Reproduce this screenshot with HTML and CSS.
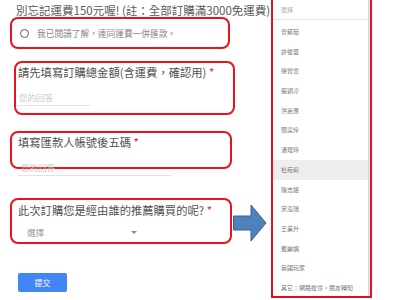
FILE: index.html
```html
<!DOCTYPE html>
<html lang="zh-Hant">
<head>
    <meta charset="UTF-8">
    <meta name="viewport" content="width=device-width, initial-scale=1.0">
    <title>訂購表單</title>
    <link rel="stylesheet" href="styles.css">
</head>
<body>
    <div class="page">
        <div class="form">
            <div class="notice">別忘記運費150元喔! (註：全部訂購滿3000免運費)</div>

            <div class="box box-radio">
                <span class="radio"></span>
                <span class="radio-label">我已閱讀了解，連同運費一併匯款。</span>
            </div>

            <div class="box box-total">
                <div class="title">請先填寫訂購總金額(含運費，確認用) <span class="req">*</span></div>
                <div class="answer answer-short">您的回答</div>
            </div>

            <div class="box box-account">
                <div class="title">填寫匯款人帳號後五碼 <span class="req">*</span></div>
                <div class="answer answer-long">您的回答</div>
            </div>

            <div class="box box-ref">
                <div class="title">此次訂購您是經由誰的推薦購買的呢? <span class="req">*</span></div>
                <div class="select">選擇<span class="caret"></span></div>
            </div>

            <button class="submit">提交</button>

            <svg class="arrow" width="34" height="38" viewBox="0 0 34 38">
                <polygon points="0.5,12 18,12 18,1 33,19 18,37 18,26 0.5,26" fill="#4f81bd" stroke="#3a6190" stroke-width="1"/>
            </svg>
        </div>

        <div class="picker">
            <div class="card">
                <div class="opt opt-first">選擇</div>
                <div class="list">
                    <div class="opt">曾郁茹</div>
                    <div class="opt">許俊華</div>
                    <div class="opt">徐智雲</div>
                    <div class="opt">張穎淳</div>
                    <div class="opt">洪嘉惠</div>
                    <div class="opt">簡奕伶</div>
                    <div class="opt">潘瑋玲</div>
                    <div class="opt opt-hover">杜宛莉</div>
                    <div class="opt">陳志銘</div>
                    <div class="opt">宋泓瑞</div>
                    <div class="opt">王美升</div>
                    <div class="opt">戴麗娟</div>
                    <div class="opt">無國玩家</div>
                    <div class="opt">其它：網路搜尋，朋友轉知</div>
                </div>
            </div>
        </div>
    </div>
</body>
</html>
```

FILE: styles.css
```css
body { margin: 0; background: #fff; font-family: "Noto Sans CJK TC", "Noto Sans", sans-serif; color: #555; }
.page { display: flex; width: 400px; height: 300px; overflow: hidden; }

.form { position: relative; width: 271px; flex: none; }
.notice { margin: 3px 0 0 16px; font-size: 11.5px; line-height: 14px; white-space: nowrap; color: #5a5a5a; }

.box { box-sizing: border-box; border: 2px solid #e8141c; border-radius: 8px; }
.title { font-size: 11.3px; line-height: 14px; white-space: nowrap; color: #505050; }
.req { color: #d93025; }
.answer { font-size: 8.5px; line-height: 12px; color: #c8c8c8; border-bottom: 1px solid #e4e4e4; padding: 0 0 2px 3px; }

.box-radio { margin-left: 10px; width: 220px; height: 32px; display: flex; align-items: center; padding-left: 8px; gap: 8px; }
.radio { box-sizing: border-box; width: 9px; height: 9px; border: 1.5px solid #5a5a5a; border-radius: 50%; }
.radio-label { font-size: 8.7px; color: #888; white-space: nowrap; }

.box-total { margin: 12px 0 0 14px; width: 221px; height: 54px; }
.box-total .title { padding: 2px 0 0 2px; }
.answer-short { margin-top: 12px; width: 71px; }

.box-account { margin: 16px 0 0 10px; width: 222px; height: 38px; }
.box-account .title { padding: 2px 0 0 6px; }
.answer-long { margin: 12px 0 0 6px; width: 151px; }

.box-ref { margin: 29px 0 0 10px; width: 222px; height: 46px; }
.box-ref .title { padding: 3px 0 0 6px; }
.select { display: flex; align-items: center; margin-top: 9px; padding-left: 15px; width: 110px; font-size: 8.5px; line-height: 12px; color: #999; }
.caret { margin-left: auto; width: 0; height: 0; border-left: 3px solid transparent; border-right: 3px solid transparent; border-top: 3px solid #888; }

.submit { display: block; margin: 29px 0 0 18px; width: 49px; height: 19px; padding: 0; border: none; border-radius: 2px; background: #4285f4; color: #fff; font-family: inherit; font-size: 8px; cursor: pointer; }

.arrow { position: absolute; left: 233px; top: 204px; }

.picker { box-sizing: border-box; width: 101px; height: 298px; border: 2px solid #e8141c; border-top: none; flex: none; }
.card { height: 100%; margin-right: 2px; background: #fff; box-shadow: 1px 0 2px rgba(0, 0, 0, 0.25); overflow: hidden; }
.opt { height: 19.7px; line-height: 19.7px; padding-left: 8px; font-size: 6px; color: #777; white-space: nowrap; }
.opt-first { height: 19px; line-height: 19px; border-bottom: 1px solid #e6e6e6; color: #aaa; }
.list { padding-top: 2px; }
.opt-hover { background: #eeeeee; }
```
